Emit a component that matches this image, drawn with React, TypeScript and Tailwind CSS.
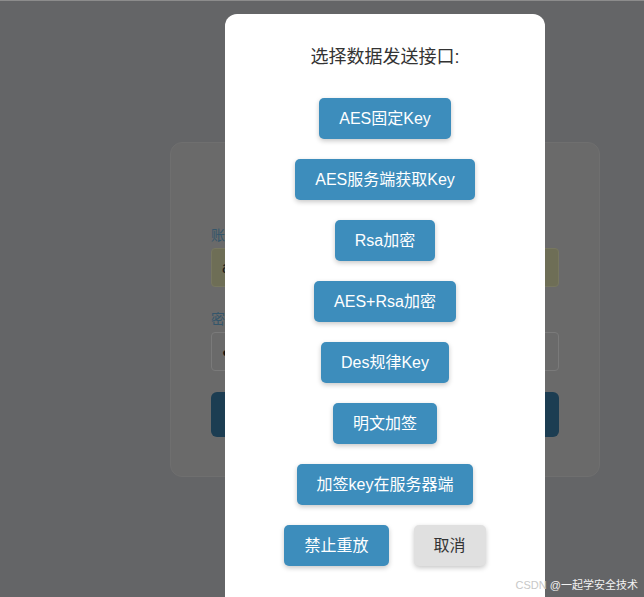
import React from "react";

const OPTIONS = [
  "AES固定Key",
  "AES服务端获取Key",
  "Rsa加密",
  "AES+Rsa加密",
  "Des规律Key",
  "明文加签",
  "加签key在服务器端",
];

const FONT = "font-['Liberation_Sans','Noto_Sans_CJK_SC',sans-serif]";

function ActionButton({ label, muted = false }: { label: string; muted?: boolean }) {
  return (
    <button
      type="button"
      className={`h-[41px] px-5 rounded-[5px] text-base leading-none shadow-[0_2px_5px_rgba(0,0,0,0.22)] ${
        muted ? "bg-[#e0e0e0] text-[#333]" : "bg-[#3d8dbc] text-white"
      }`}
    >
      {label}
    </button>
  );
}

export default function App() {
  return (
    <div className={`relative w-[644px] h-[597px] overflow-hidden bg-[#646567] border-t border-[#8c8c8c] ${FONT}`}>
      {/* dimmed login page underneath */}
      <div className="pt-[141px] pl-[170px]">
        <div className="w-[430px] h-[335px] rounded-xl bg-[#6a6a6a] border border-[#6f6f6f] px-10 pt-[82px]">
          <div className="text-sm leading-5 text-[#34566b]">账号</div>
          <div className="mt-[3px] h-[39px] rounded border border-[#777760] bg-[#6e6e56] flex items-center px-[10px] text-base text-[#1d1d1d]">
            admin
          </div>
          <div className="mt-[22px] text-sm leading-5 text-[#34566b]">密码</div>
          <div className="mt-[3px] h-[39px] rounded border border-[#7a7a7a] bg-[#6a6a6a] flex items-center px-[10px] text-sm tracking-[2px] text-[#111]">
            ●●●●●●
          </div>
          <div className="mt-[21px] h-[45px] rounded-md bg-[#1c3d52]" />
        </div>
      </div>

      {/* modal */}
      <div className="absolute left-[225px] top-[13px] w-[320px] h-[620px] rounded-xl bg-white flex flex-col items-center pt-[30px]">
        <div className="text-lg leading-[26px] text-[#333]">选择数据发送接口:</div>
        <div className="mt-[28px] flex flex-col items-center gap-5">
          {OPTIONS.map((o) => (
            <ActionButton key={o} label={o} />
          ))}
          <div className="flex gap-[25px]">
            <ActionButton label="禁止重放" />
            <ActionButton label="取消" muted />
          </div>
        </div>
      </div>

      {/* watermark */}
      <div className="absolute right-[6px] bottom-[6px] text-[11px] leading-none">
        <span className="text-[#c8c8c8]">CSDN </span>
        <span className="text-[#f2f2f2]">@一起学安全技术</span>
      </div>
    </div>
  );
}
